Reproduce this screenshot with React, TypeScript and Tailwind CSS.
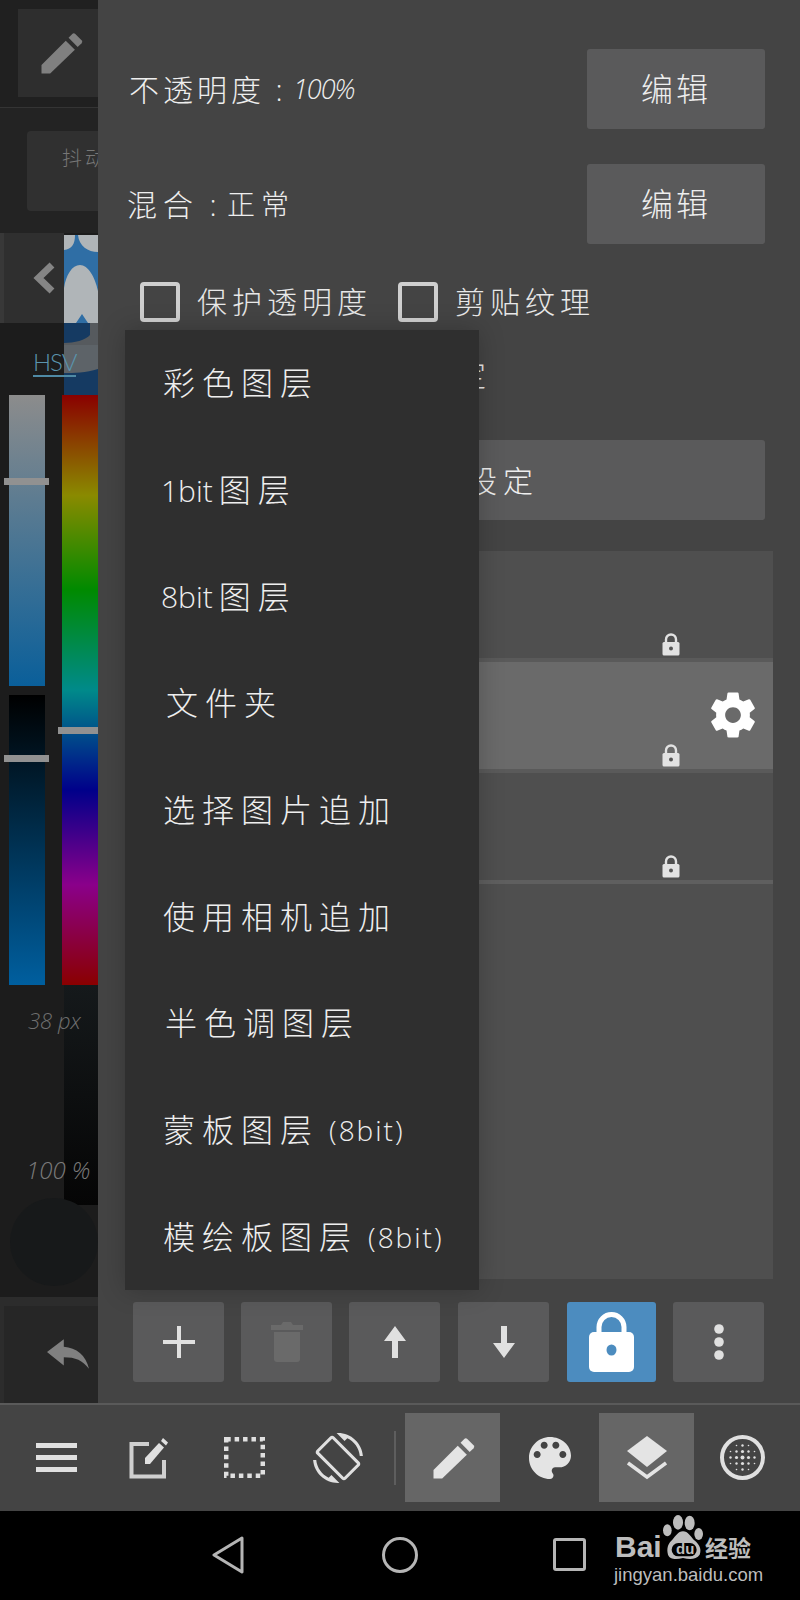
const cjk = "font-['Open_Sans','Noto_Sans_CJK_SC',sans-serif] font-light";

const menuItems = [
  { label: "彩色图层" },
  { latin: "1bit", label: "图层", indent: "pl-[36px]" },
  { latin: "8bit", label: "图层", indent: "pl-[36px]" },
  { label: "文件夹", indent: "pl-[41px]" },
  { label: "选择图片追加" },
  { label: "使用相机追加" },
  { label: "半色调图层", indent: "pl-[40px]" },
  { label: "蒙板图层", suffix: "(8bit)" },
  { label: "模绘板图层", suffix: "(8bit)" },
];

function Pencil({ className }: { className?: string }) {
  return (
    <svg viewBox="0 0 24 24" className={className} fill="currentColor">
      <path d="M3 21.5v-4L14.2 6.3l4.2 4.2L7 21.5z" />
      <path d="M15.5 5l1.7-1.8a1 1 0 0 1 1.4 0l2.900 2.900a1 1 0 0 1 0 1.400l-1.800 1.700z" />
    </svg>
  );
}

function SmallLock({ className }: { className?: string }) {
  return (
    <svg viewBox="0 0 18 23" className={className}>
      <path d="M4 10V6.500a5 5 0 0 1 10 0V10" fill="none" stroke="#e2e2e2" strokeWidth="2.400" />
      <rect x="0.500" y="9" width="17" height="13.500" rx="1.500" fill="#e2e2e2" />
      <circle cx="9" cy="15.500" r="2" fill="#555" />
    </svg>
  );
}

function Gear() {
  return (
    <svg viewBox="0 0 24 24" className="h-[54px] w-[54px]" fill="#fff">
      <path d="M19.430 12.980c.04-.32.07-.64.07-.98s-.03-.66-.07-.98l2.110-1.650c.19-.15.24-.42.12-.64l-2-3.460c-.12-.22-.39-.3-.61-.22l-2.490 1c-.52-.4-1.080-.73-1.690-.98l-.38-2.650A.488.488 0 0 0 14 2h-4c-.25 0-.46.18-.49.42l-.38 2.650c-.61.25-1.170.59-1.690.98l-2.490-1c-.23-.09-.49 0-.61.22l-2 3.460c-.13.22-.07.49.12.64l2.110 1.650c-.04.32-.07.65-.07.98s.03.66.07.98l-2.110 1.650c-.19.15-.24.42-.12.64l2 3.460c.12.22.39.3.61.22l2.490-1c.52.4 1.080.73 1.690.98l.38 2.650c.03.24.24.42.49.42h4c.25 0 .46-.18.49-.42l.38-2.650c.61-.25 1.170-.59 1.690-.98l2.490 1c.23.09.49 0 .61-.22l2-3.460c.12-.22.07-.49-.12-.64l-2.110-1.650zM12 15.500c-1.930 0-3.500-1.570-3.500-3.500s1.570-3.500 3.500-3.500 3.500 1.570 3.500 3.500-1.570 3.500-3.500 3.500z" />
    </svg>
  );
}

function LeftPanel() {
  return (
    <div className="flex h-[1403px] w-[98px] shrink-0 flex-col bg-[#1c1c1c]">
      <div className="h-[107px] bg-[#202020] pl-[18px] pt-[9px]">
        <div className="flex h-[88px] w-[80px] items-center justify-center bg-[#2e2e2e] pl-[6px] text-[#808080]">
          <Pencil className="h-[52px] w-[52px]" />
        </div>
      </div>
      <div className="h-px bg-[#343434]" />
      <div className="h-[125px] bg-[#232323] pl-[27px] pt-[23px]">
        <div className={`h-[80px] w-[71px] overflow-hidden whitespace-nowrap rounded-l bg-[#303030] pl-[35px] pt-[13px] text-[20px] tracking-[3px] text-[#777] ${cjk}`}>
          抖动修正
        </div>
      </div>
      <div className="flex h-[162px]">
        <div className="relative z-10 w-[64px]">
          <div className="flex h-[90px] items-center border-l-[4px] border-[#383838] bg-[#2f2f2f] pl-[29px]">
            <svg viewBox="0 0 22 32" className="h-[32px] w-[22px]" fill="none" stroke="#858585" strokeWidth="7">
              <path d="M19 3L5.500 16 19 29" />
            </svg>
          </div>
          <div className="pl-[33px] pt-[26px]">
            <span className="inline-block whitespace-nowrap border-b-2 border-[#4f8aa5] text-[24px] leading-[26px] tracking-[-1px] font-['Lato',sans-serif] font-light text-[#5a93ad]">
              HSV
            </span>
          </div>
        </div>
        <svg viewBox="0 0 34 162" className="h-[162px] w-[34px]" preserveAspectRatio="none">
          <rect y="2" width="34" height="90" fill="#2f6ea5" />
          <rect y="90" width="34" height="72" fill="#153a62" />
          <path d="M0 2h11c0 9-3 14-11 15zM14 2h20v17c-10 0-19-6-20-17z" fill="#b0b5b8" />
          <path d="M0 90V55C2 42 8 32 16 32s15 12 18 26v32H24l-6-9-6 9z" fill="#b0b5b8" />
          <path d="M26 90h8v22H0v-2c10 0 22-3 26-8z" fill="#565a5e" />
          <path d="M0 112h34v24c-12 4-24 4-34 4z" fill="#5d6368" />
        </svg>
      </div>
      <div className="relative flex h-[590px] pl-[9px]">
        <div className="flex w-[36px] flex-col gap-[9px]">
          <div className="h-[291px] bg-[linear-gradient(to_bottom,#8c8c8c,#0a5f9a)]" />
          <div className="h-[290px] bg-[linear-gradient(to_bottom,#000000,#005f9f)]" />
        </div>
        <div className="ml-[17px] w-[36px] bg-[linear-gradient(to_bottom,#8a0000_0%,#8a8a00_17%,#008a00_33%,#008a8a_50%,#00008a_67%,#8a008a_83%,#8a0000_100%)]" />
        <div className="absolute left-[4px] top-[83px] h-[7px] w-[45px] bg-[#919191]" />
        <div className="absolute left-[4px] top-[360px] h-[7px] w-[45px] bg-[#919191]" />
        <div className="absolute left-[58px] top-[332px] h-[7px] w-[40px] bg-[#919191]" />
      </div>
      <div className="relative h-[312px] overflow-hidden">
        <div className="absolute right-0 top-0 h-[220px] w-[34px] rounded-bl-sm bg-[linear-gradient(to_bottom,#15191b,#050505)]" />
        <div className="absolute left-[10px] top-[213px] h-[88px] w-[88px] rounded-full bg-[#17191a]" />
        <div className={`relative pl-[28px] pt-[20px] text-[22px] leading-[30px] italic text-[#707070] ${cjk}`}>38 px</div>
        <div className={`relative pl-[26px] pt-[120px] text-[24px] leading-[30px] italic text-[#7a7a7a] ${cjk}`}>100 %</div>
      </div>
      <div className="h-[9px] bg-[#2c2c2c]" />
      <div className="flex h-[97px] items-center border-l-[4px] border-[#2c2c2c] bg-[#262626] pb-[2px] pl-[43px]">
        <svg viewBox="0 0 40 28" className="h-[30px] w-[42px]" fill="#808080">
          <path d="M0 12L16 0v7c12 1 21 8 24 21-6-8-13-11-24-11v8z" />
        </svg>
      </div>
    </div>
  );
}

function Checkbox({ label, className }: { label: string; className?: string }) {
  return (
    <div className={`flex items-center ${className ?? ""}`}>
      <div className="h-[40px] w-[40px] rounded-[4px] border-[4px] border-[#cfcfcf]" />
      <span className={`whitespace-nowrap pl-[17px] text-[30px] leading-[40px] tracking-[5px] text-[#e8e8e8] ${cjk}`}>{label}</span>
    </div>
  );
}

function LayerRow({ selected }: { selected?: boolean }) {
  return (
    <div className={`relative h-[107px] ${selected ? "bg-[#6a6a6a]" : ""}`}>
      <SmallLock className="absolute left-[529px] bottom-[2px] h-[23px] w-[18px]" />
      {selected && (
        <div className="absolute left-[573px] top-[26px]">
          <Gear />
        </div>
      )}
    </div>
  );
}

function ActionButton({ children, blue }: { children: React.ReactNode; blue?: boolean }) {
  return (
    <div className={`flex h-[80px] items-center justify-center rounded-[3px] ${blue ? "w-[89px] bg-[#4c8cbf]" : "w-[91px] bg-[#5a5a5b]"}`}>
      {children}
    </div>
  );
}

function MainPanel() {
  return (
    <div className="relative h-[1403px] flex-1 bg-[#444444] pt-[49px]">
      <div className="flex items-center justify-between pl-[31px] pr-[35px]">
        <span className={`flex items-center text-[30px] text-[#eeeeee] ${cjk}`}>
          <span className="tracking-[4px]">不透明度</span>
          <span className="w-[28px] text-center">:</span>
          <span className="text-[27px] tracking-[-1px] italic">100%</span>
        </span>
        <div className={`flex h-[80px] w-[178px] items-center justify-center rounded-[3px] bg-[#5a5a5b] text-[32px] tracking-[3px] text-[#eeeeee] ${cjk}`}>
          编辑
        </div>
      </div>
      <div className="mt-[35px] flex items-center justify-between pl-[29px] pr-[35px]">
        <span className={`flex items-center text-[30px] tracking-[6px] text-[#eeeeee] ${cjk}`}>
          <span>混合</span>
          <span className="w-[28px] text-center tracking-normal">:</span>
          <span className="text-[28px]">正常</span>
        </span>
        <div className={`flex h-[80px] w-[178px] items-center justify-center rounded-[3px] bg-[#5a5a5b] text-[32px] tracking-[3px] text-[#eeeeee] ${cjk}`}>
          编辑
        </div>
      </div>
      <div className="mt-[38px] flex pl-[42px]">
        <Checkbox label="保护透明度" className="w-[258px]" />
        <Checkbox label="剪贴纹理" />
      </div>
      <div className={`mt-[33px] h-[40px] whitespace-nowrap pl-[106px] text-[30px] leading-[40px] tracking-[6px] text-[#e8e8e8] ${cjk}`}>
        作为草稿图层设定
      </div>
      <div className={`ml-[35px] mt-[45px] flex h-[80px] w-[632px] items-center justify-center rounded-[3px] bg-[#5a5a5b] text-[30px] tracking-[6px] text-[#eeeeee] ${cjk}`}>
        图层名设定
      </div>
      <div className="ml-[35px] mt-[31px] h-[728px] w-[640px] bg-[#4f4f4f]">
        <LayerRow />
        <div className="h-[4px] bg-[#5a5a5a]" />
        <LayerRow selected />
        <div className="h-[4px] bg-[#5a5a5a]" />
        <LayerRow />
        <div className="h-[4px] bg-[#5f5f5f]" />
      </div>
      <div className="ml-[35px] mt-[23px] flex gap-[17px]">
        <ActionButton>
          <svg viewBox="0 0 32 32" className="h-[32px] w-[32px]" fill="#e0e0e0">
            <path d="M14 0h4v14h14v4H18v14h-4V18H0v-4h14z" />
          </svg>
        </ActionButton>
        <ActionButton>
          <svg viewBox="0 0 32 40" className="h-[40px] w-[32px]" fill="#6a6a6a">
            <path d="M0 3h10l2-3h8l2 3h10v5H0zM3 10h26v27a3 3 0 0 1-3 3H6a3 3 0 0 1-3-3z" />
          </svg>
        </ActionButton>
        <ActionButton>
          <svg viewBox="0 0 22 32" className="h-[32px] w-[22px]" fill="#e0e0e0">
            <path d="M11 0l11 15h-8v17H8V15H0z" />
          </svg>
        </ActionButton>
        <div className="ml-px">
          <ActionButton>
            <svg viewBox="0 0 22 32" className="h-[32px] w-[22px]" fill="#e0e0e0">
              <path d="M11 32L0 17h8V0h6v17h8z" />
            </svg>
          </ActionButton>
        </div>
        <div className="ml-px">
          <ActionButton blue>
            <svg viewBox="0 0 45 60" className="h-[60px] w-[45px]">
              <path d="M10 24V15a12.500 12.500 0 0 1 25 0v9" fill="none" stroke="#fff" strokeWidth="5" />
              <rect y="20" width="45" height="40" rx="5" fill="#fff" />
              <ellipse cx="22.500" cy="38" rx="5" ry="5.500" fill="#4c8cbf" />
            </svg>
          </ActionButton>
        </div>
        <ActionButton>
          <svg viewBox="0 0 10 36" className="h-[36px] w-[10px]" fill="#e0e0e0">
            <circle cx="5" cy="5" r="4.800" />
            <circle cx="5" cy="18" r="4.800" />
            <circle cx="5" cy="31" r="4.800" />
          </svg>
        </ActionButton>
      </div>
      <div className="absolute left-[27px] top-[330px] flex h-[960px] w-[354px] flex-col bg-[#2f2f2f] shadow-[0_0_24px_rgba(0,0,0,0.22)]">
        {menuItems.map((item) => (
          <div
            key={item.label + (item.latin ?? "")}
            className={`flex flex-1 items-center whitespace-nowrap text-[32px] tracking-[7px] text-[#eeeeee] ${item.indent ?? "pl-[38px]"} ${cjk}`}
          >
            {item.latin && <span className="pr-[6px] text-[30px] tracking-normal">{item.latin}</span>}
            {item.label}
            {item.suffix && <span className="pl-[10px] text-[28px] tracking-[2px]">{item.suffix}</span>}
          </div>
        ))}
      </div>
    </div>
  );
}

function Halftone() {
  const dots = [];
  for (let y = 0; y < 5; y++) {
    for (let x = 0; x < 5; x++) {
      const d = Math.abs(x - 2) + Math.abs(y - 2);
      if (d > 3) continue;
      dots.push(<circle key={`${x}-${y}`} cx={10.5 + x * 6} cy={10.5 + y * 6} r={d === 0 ? 2 : d === 1 ? 1.6 : d === 2 ? 1.2 : 0.8} />);
    }
  }
  return (
    <svg viewBox="0 0 45 45" className="h-[45px] w-[45px]" fill="#e0e0e0">
      <circle cx="22.500" cy="22.500" r="20.500" fill="none" stroke="#e0e0e0" strokeWidth="4" />
      {dots}
    </svg>
  );
}

function Toolbar() {
  const slot = "flex h-[89px] items-center justify-center";
  return (
    <div className="flex h-[108px] items-start border-t-2 border-[#5a5a5a] bg-[#444444] pt-[8px]">
      <div className={`${slot} w-[100px] pl-[12px]`}>
        <div className="flex w-[41px] flex-col gap-[7px]">
          <div className="h-[5px] bg-[#e0e0e0]" />
          <div className="h-[5px] bg-[#e0e0e0]" />
          <div className="h-[5px] bg-[#e0e0e0]" />
        </div>
      </div>
      <div className={`${slot} w-[94px] pl-[6px]`}>
        <svg viewBox="0 0 42 42" className="h-[42px] w-[42px]">
          <path d="M20 7H2.500v32.500H35V23" fill="none" stroke="#cfcfcf" strokeWidth="4" />
          <path d="M16 27v-6L30 6l5 4.500-14 16.500z" fill="#e0e0e0" />
          <path d="M32 4l2-3 5 4.500-2 3z" fill="#e0e0e0" />
        </svg>
      </div>
      <div className={`${slot} w-[96px] pl-[4px]`}>
        <svg viewBox="0 0 41 41" className="h-[41px] w-[41px]" fill="none" stroke="#e0e0e0" strokeWidth="4.500">
          <rect x="2.200" y="2.200" width="36.600" height="36.600" strokeDasharray="4.500 3.920" />
        </svg>
      </div>
      <div className={`${slot} w-[95px]`}>
        <svg viewBox="0 0 24 24" className="h-[50px] w-[50px]" fill="#e0e0e0">
          <path d="M16.480 2.520c3.270 1.550 5.610 4.720 5.970 8.480h1.500C23.440 4.840 18.290 0 12 0l-.66.03 3.810 3.810 1.330-1.320zm-6.250-.77c-.59-.59-1.540-.59-2.120 0L1.750 8.110c-.59.59-.59 1.540 0 2.120l12.020 12.020c.59.59 1.540.59 2.120 0l6.360-6.360c.59-.59.59-1.540 0-2.120L10.230 1.750zm4.600 19.440L2.810 9.170l6.360-6.360 12.020 12.020-6.360 6.360zm-7.310.29C4.250 19.940 1.910 16.760 1.550 13H.05C.56 19.160 5.710 24 12 24l.66-.03-3.810-3.810-1.330 1.320z" />
        </svg>
      </div>
      <div className="mx-[9px] mt-[18px] h-[54px] w-[2px] bg-[#5e5e5e]" />
      <div className={`${slot} w-[95px] bg-[#666666] text-[#e4e4e4]`}>
        <Pencil className="h-[52px] w-[52px]" />
      </div>
      <div className={`${slot} w-[99px]`}>
        <svg viewBox="3 3 18 18" className="h-[42px] w-[42px]" fill="#e4e4e4">
          <path d="M12 3c-4.970 0-9 4.030-9 9s4.030 9 9 9c.83 0 1.500-.67 1.500-1.500 0-.39-.15-.74-.39-1.010-.23-.26-.38-.61-.38-.99 0-.83.67-1.500 1.500-1.500H16c2.760 0 5-2.240 5-5 0-4.420-4.030-8-9-8zm-5.500 9c-.83 0-1.500-.67-1.500-1.500S5.670 9 6.500 9 8 9.670 8 10.500 7.330 12 6.500 12zm3-4C8.670 8 8 7.330 8 6.500S8.670 5 9.500 5s1.500.67 1.500 1.500S10.330 8 9.500 8zm5 0c-.83 0-1.500-.67-1.500-1.500S13.670 5 14.500 5s1.500.67 1.500 1.500S15.330 8 14.500 8zm3 4c-.83 0-1.500-.67-1.500-1.500S16.670 9 17.500 9s1.500.67 1.500 1.500-.67 1.500-1.500 1.500z" />
        </svg>
      </div>
      <div className={`${slot} w-[95px] bg-[#666666]`}>
        <svg viewBox="0 0 40 44" className="h-[44px] w-[40px]">
          <path d="M20 0l20 15-20 16L0 15z" fill="#e4e4e4" />
          <path d="M1 27l19 14 19-14" fill="none" stroke="#e4e4e4" strokeWidth="3.500" />
        </svg>
      </div>
      <div className={`${slot} w-[97px]`}>
        <Halftone />
      </div>
    </div>
  );
}

function NavBar() {
  return (
    <div className="relative flex h-[89px] items-center bg-black pb-[2px] pl-[212px]">
      <svg viewBox="0 0 32 38" className="h-[38px] w-[32px]" fill="none" stroke="#b5b5b5" strokeWidth="3" strokeLinejoin="round">
        <path d="M30 2L2 19l28 17z" />
      </svg>
      <div className="ml-[138px] h-[36px] w-[36px] rounded-full border-[3px] border-[#b5b5b5]" />
      <div className="ml-[135px] h-[33px] w-[33px] rounded-[3px] border-[3px] border-[#b5b5b5]" />
      <div className="absolute left-[614px] top-[4px] h-[80px] w-[142px]">
        <svg viewBox="0 0 120 150" className="absolute left-[49px] top-[-2px] h-[50px] w-[40px]">
          <g fill="#bdbdbd">
            <ellipse cx="13" cy="52" rx="13" ry="18" />
            <ellipse cx="45" cy="28" rx="15" ry="22" />
            <ellipse cx="80" cy="30" rx="15" ry="22" />
            <ellipse cx="107" cy="63" rx="13" ry="18" />
            <path d="M60 55C45 55 38 70 28 80 15 92 10 105 15 125 20 140 40 140 60 135 80 140 100 140 110 125 118 105 105 90 92 80 82 70 75 55 60 55z" />
          </g>
          <rect x="26" y="90" width="75" height="40" rx="20" fill="#000" />
        </svg>
        <span className="absolute left-[1px] top-[15px] text-[30px] leading-[34px] font-['Liberation_Sans',sans-serif] font-bold text-[#bdbdbd]">Bai</span>
        <span className="absolute left-[62px] top-[25px] text-[15px] leading-[18px] font-['Liberation_Sans',sans-serif] font-bold text-[#bdbdbd]">du</span>
        <span className="absolute left-[91px] top-[17px] text-[23px] leading-[30px] font-['Noto_Sans_CJK_SC',sans-serif] font-bold text-[#bdbdbd]">经验</span>
        <span className="absolute left-0 top-[48px] text-[18.500px] leading-[24px] font-['Liberation_Sans',sans-serif] text-[#bdbdbd]">jingyan.baidu.com</span>
      </div>
    </div>
  );
}

export default function App() {
  return (
    <div className="h-[1600px] w-[800px] overflow-hidden bg-black">
      <div className="flex">
        <LeftPanel />
        <MainPanel />
      </div>
      <Toolbar />
      <NavBar />
    </div>
  );
}
